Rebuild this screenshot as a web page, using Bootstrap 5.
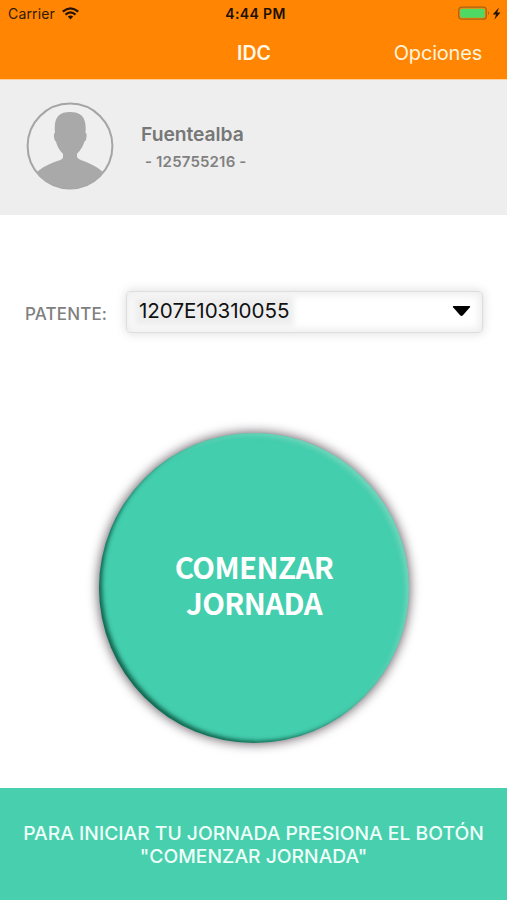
<!DOCTYPE html>
<html lang="es">
<head>
<meta charset="utf-8">
<meta name="viewport" content="width=device-width, initial-scale=1">
<title>IDC</title>
<link href="https://cdn.jsdelivr.net/npm/bootstrap@5.3.0/dist/css/bootstrap.min.css" rel="stylesheet">
<style>
body{font-family:Inter,"Liberation Sans",sans-serif;height:900px;overflow:hidden}
.app-top{background:#ff8503;height:80px;border-bottom:1px solid #ffcf99}
.status-row{height:27px;font-size:14px;line-height:27px;color:#301900;padding:0 5px 0 8px}
.carrier{letter-spacing:.15px}
.wifi{margin-left:7px}
.clock{font-weight:600;letter-spacing:.35px;color:#201000;padding-left:4px;white-space:nowrap}
.title-row{height:52px;line-height:52px;color:#fff8e8;font-size:20px;padding:0 25px}
.title-row>*{flex:1 1 0}
.app-title{font-weight:600;font-size:19.5px;padding-left:1px}
.option-link{color:#fff4dc;letter-spacing:-.2px}
.profile{background:#eee;height:135px;padding:22px 0 0 26px}
.person{color:#777;font-weight:600;font-size:19.3px;line-height:24px;margin:20px 0 0 27px;letter-spacing:-.05px}
.person-id{color:#808080;font-weight:600;font-size:15px;line-height:20px;letter-spacing:.17px;margin:6px 0 0 31px}
.plate{padding:75px 24px 0 25px;height:118px}
.plate-label{width:101px;color:#808080;font-weight:500;font-size:17px;padding-top:6px;letter-spacing:.15px}
.plate-field{height:42px;border:1px solid #dedede;border-radius:4px;color:#111;font-size:20.6px;line-height:1;padding:0 11px 1px 12px;box-shadow:0 0 11px rgba(0,0,0,.15),inset 0 0 9px 3px rgba(0,0,0,.07)}
.plate-value{background:#eee;box-shadow:0 0 6px 5px #eee;letter-spacing:-.05px}
.start{width:310px;height:310px;margin:100px 0 0 1px;color:#fff;background:#43ceae;font-family:"Noto Sans CJK SC","Noto Sans",sans-serif;font-weight:700;font-size:29.5px;line-height:36px;letter-spacing:-.6px;padding-bottom:14px;box-shadow:0 0 11px 1px rgba(20,0,15,.62),inset 4px -3px 4px -1px rgba(0,65,45,.75),inset -4px 3px 5px -1px rgba(130,215,190,.75)}
.start:hover{color:#fff;background:#43ceae}
.hint{height:112px;background:#48cfad;color:#eefffa;font-size:19.3px;line-height:23px;font-weight:500;padding-top:1px}
</style>
</head>
<body class="bg-white d-flex flex-column">
<header class="app-top">
  <div class="status-row d-flex justify-content-between position-relative">
    <div class="d-flex align-items-center"><span class="carrier">Carrier</span>
      <svg class="wifi" width="17" height="13" viewBox="0 0 17 13" fill="none" stroke="#251300" stroke-width="2.200"><path d="M.8 4.600Q8.500-2 16.200 4.600M3.500 7.600Q8.500 3.200 13.500 7.600"/><path d="M5.800 9.600Q8.500 7.400 11.200 9.600L8.500 12.500Z" fill="#251300" stroke="none"/></svg>
    </div>
    <span class="clock position-absolute start-50 translate-middle-x">4:44 PM</span>
    <svg class="align-self-center" width="45" height="15" viewBox="0 0 45 15"><rect x="1.700" y="1.200" width="27.600" height="12" rx="3" fill="none" stroke="#a66417" stroke-width="1.300"/><rect x="3.200" y="2.700" width="24.600" height="9" rx="1.600" fill="#4dd964"/><path d="M31 5.300q2.400 1.900 0 3.800z" fill="#a66417"/><path d="M42 1.500 35.700 8.400h3.300l-1.500 5.100L43.500 6.500h-3.300z" fill="#251300"/></svg>
  </div>
  <div class="title-row d-flex">
    <span></span>
    <span class="app-title text-center">IDC</span>
    <a class="option-link text-end text-decoration-none" href="#">Opciones</a>
  </div>
</header>
<section class="profile d-flex align-items-start">
  <svg width="88" height="88" viewBox="0 0 88 88"><defs><clipPath id="disc"><circle cx="44" cy="44" r="42.5"/></clipPath></defs><circle cx="44" cy="44" r="42.4" fill="#efefef" stroke="#a5a5a5" stroke-width="2"/><path clip-path="url(#disc)" fill="#a9a9a9" d="M29 31C27.500 15 33 10 44 10S61 15 59.500 31Q61 31 60.500 35Q60 39 58.500 39.500C56.500 46 53.500 49 51 52V55Q52 57 56 58.500C66 62 73 66 78 71L72 90H16L10 71C15 66 22 62 33 58.500Q37 57 37 55V52C34.500 49 31.500 46 30 39.500Q28.500 39 28 35Q27.500 31 29 31Z"/></svg>
  <div>
    <h1 class="person">Fuentealba</h1>
    <div class="person-id">- 125755216 -</div>
  </div>
</section>
<main class="flex-grow-1 d-flex flex-column">
  <div class="plate d-flex align-items-center">
    <label class="plate-label flex-shrink-0">PATENTE:</label>
    <div class="plate-field flex-grow-1 d-flex align-items-center justify-content-between" role="combobox" aria-expanded="false">
      <span class="plate-value">1207E10310055</span>
      <svg width="19" height="12" viewBox="0 0 19 12"><path d="M1.500 1h16q1.200.300.400 1.300l-7 8q-1.400 1.200-2.800 0l-7-8Q.300 1.300 1.500 1Z" fill="#000"/></svg>
    </div>
  </div>
  <button class="start btn rounded-circle border-0 align-self-center" type="button">COMENZAR<br>JORNADA</button>
</main>
<footer class="hint d-flex align-items-center justify-content-center text-center">
  <div>PARA INICIAR TU JORNADA PRESIONA EL BOTÓN<br>"COMENZAR JORNADA"</div>
</footer>
<script src="https://cdn.jsdelivr.net/npm/bootstrap@5.3.0/dist/js/bootstrap.bundle.min.js"></script>
</body>
</html>
